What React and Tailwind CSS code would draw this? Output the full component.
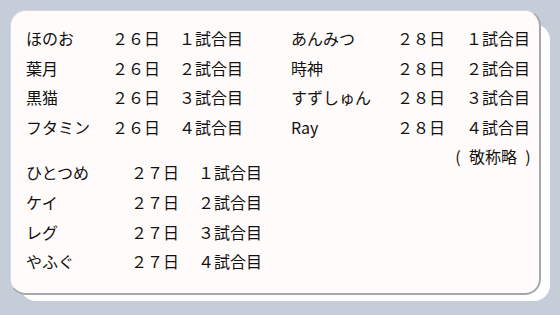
const dayOne = [
  { name: "ほのお", day: "２６日", match: "１試合目" },
  { name: "葉月", day: "２６日", match: "２試合目" },
  { name: "黒猫", day: "２６日", match: "３試合目" },
  { name: "フタミン", day: "２６日", match: "４試合目" },
];

const dayTwo = [
  { name: "ひとつめ", day: "２７日", match: "１試合目" },
  { name: "ケイ", day: "２７日", match: "２試合目" },
  { name: "レグ", day: "２７日", match: "３試合目" },
  { name: "やふぐ", day: "２７日", match: "４試合目" },
];

const dayThree = [
  { name: "あんみつ", day: "２８日", match: "１試合目" },
  { name: "時神", day: "２８日", match: "２試合目" },
  { name: "すずしゅん", day: "２８日", match: "３試合目" },
  { name: "Ray", day: "２８日", match: "４試合目" },
];

function Schedule({ rows, cols }) {
  return (
    <div className={`grid ${cols}`}>
      {rows.map((row) => (
        <div key={row.name} className="contents">
          <div className="h-[29.6px] leading-[29.6px] whitespace-nowrap">{row.name}</div>
          <div className="h-[29.6px] leading-[29.6px] whitespace-nowrap">{row.day}</div>
          <div className="h-[29.6px] leading-[29.6px] whitespace-nowrap">{row.match}</div>
        </div>
      ))}
    </div>
  );
}

export default function App() {
  return (
    <div
      className="relative w-[560px] h-[315px] overflow-hidden bg-[#c5cdd8] pt-[10px] pl-[10px] pr-[19px] pb-[20px] text-[16px] text-[#111]"
      style={{ fontFamily: '"Noto Sans CJK JP", "Noto Sans", sans-serif' }}
    >
      {/* card stacked behind */}
      <div className="absolute left-[20px] top-[24px] w-[530px] h-[277px] rounded-[16px] bg-white" />

      <div className="relative h-full rounded-[16px] bg-[#fffbfa] border-l border-t border-[#d9d9d9] border-r-2 border-b-2 border-r-[#a8a8a8] border-b-[#a8a8a8] pl-[15px] pt-[13px]">
        <div className="flex">
          <div className="w-[265px]">
            <Schedule rows={dayOne} cols="grid-cols-[86px_67px_auto]" />
            <div className="mt-[16px]">
              <Schedule rows={dayTwo} cols="grid-cols-[105px_67px_auto]" />
            </div>
          </div>
          <div className="w-[241px]">
            <Schedule rows={dayThree} cols="grid-cols-[106px_69px_auto]" />
            <div className="flex justify-end h-[29.6px] leading-[29.6px] whitespace-nowrap">
              <span className="inline-block w-[8px] text-center mr-[7px]">(</span>
              <span>敬称略</span>
              <span className="inline-block w-[8px] text-center ml-[7px]">)</span>
            </div>
          </div>
        </div>
      </div>
    </div>
  );
}
